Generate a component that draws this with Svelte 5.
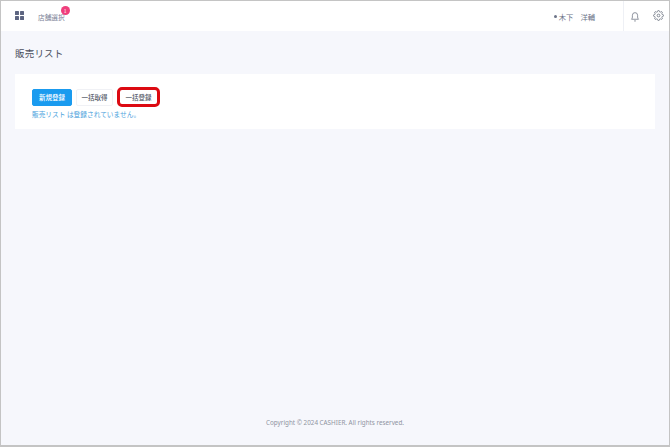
<script>
  const actions = [
    { label: '新規登録', kind: 'primary' },
    { label: '一括取得', kind: 'plain' },
    { label: '一括登録', kind: 'marked' }
  ];
</script>

<div class="frame">
  <header class="topbar">
    <div class="left">
      <svg class="grid" width="9" height="9" viewBox="0 0 10 10" fill="#5c6480">
        <rect x="0" y="0" width="4.4" height="4.4" rx="0.6" />
        <rect x="5.6" y="0" width="4.4" height="4.4" rx="0.6" />
        <rect x="0" y="5.6" width="4.4" height="4.4" rx="0.6" />
        <rect x="5.6" y="5.6" width="4.4" height="4.4" rx="0.6" />
      </svg>
      <div class="store">
        店舗選択
        <span class="badge">1</span>
      </div>
    </div>
    <div class="right">
      <div class="user"><span class="dot"></span>木下<span class="given">洋輔</span></div>
      <div class="icon-cell bell">
        <svg width="10" height="11" viewBox="0 0 20 22" fill="none" stroke="#6b7280" stroke-width="1.5" stroke-linejoin="round">
          <path d="M3 16.5c1.2-1.4 1.8-2.6 1.8-4.5V8.5a5.2 5.2 0 0 1 10.4 0V12c0 1.900.6 3.100 1.800 4.500z" />
          <path d="M8 19c.5 1.300 3.500 1.300 4 0" />
        </svg>
      </div>
      <div class="icon-cell gear">
        <svg width="11" height="11" viewBox="0 0 24 24" fill="none" stroke="#6b7280" stroke-width="1.800">
          <circle cx="12" cy="12" r="3" />
          <path d="M19.4 15a1.65 1.65 0 0 0 .33 1.82l.06.06a2 2 0 0 1 0 2.83 2 2 0 0 1-2.83 0l-.06-.06a1.65 1.65 0 0 0-1.82-.33 1.65 1.65 0 0 0-1 1.51V21a2 2 0 0 1-2 2 2 2 0 0 1-2-2v-.09A1.65 1.65 0 0 0 9 19.4a1.65 1.65 0 0 0-1.82.33l-.06.06a2 2 0 0 1-2.83 0 2 2 0 0 1 0-2.83l.06-.06a1.65 1.65 0 0 0 .33-1.82 1.65 1.65 0 0 0-1.51-1H3a2 2 0 0 1-2-2 2 2 0 0 1 2-2h.09A1.65 1.65 0 0 0 4.6 9a1.65 1.65 0 0 0-.33-1.82l-.06-.06a2 2 0 0 1 0-2.83 2 2 0 0 1 2.83 0l.06.06a1.65 1.65 0 0 0 1.82.33H9a1.65 1.65 0 0 0 1-1.51V3a2 2 0 0 1 2-2 2 2 0 0 1 2 2v.09a1.65 1.65 0 0 0 1 1.51 1.65 1.65 0 0 0 1.82-.33l.06-.06a2 2 0 0 1 2.83 0 2 2 0 0 1 0 2.83l-.06.06a1.65 1.65 0 0 0-.33 1.82V9a1.65 1.65 0 0 0 1.51 1H21a2 2 0 0 1 2 2 2 2 0 0 1-2 2h-.09a1.65 1.65 0 0 0-1.51 1z" />
        </svg>
      </div>
    </div>
  </header>

  <main class="content">
    <h1>販売リスト</h1>
    <section class="card">
      <div class="actions">
        {#each actions as action}
          <button class={action.kind}>{action.label}</button>
        {/each}
      </div>
      <p class="empty">販売リスト は登録されていません。</p>
    </section>
  </main>

  <footer>Copyright © 2024 CASHIER. All rights reserved.</footer>
</div>

<style>
  :global(body) {
    margin: 0;
  }

  .frame {
    box-sizing: border-box;
    width: 670px;
    height: 447px;
    border: 1px solid #c4c4c4;
    border-bottom-width: 2px;
    background: #f6f7fc;
    display: flex;
    flex-direction: column;
    font-family: "Noto Sans CJK JP", "Noto Sans", sans-serif;
  }

  .topbar {
    height: 30px;
    background: #fff;
    display: flex;
    justify-content: space-between;
    flex-shrink: 0;
  }

  .left {
    display: flex;
    align-items: center;
    padding-left: 14px;
    gap: 14px;
  }

  .grid {
    margin-top: -1px;
  }

  .store {
    position: relative;
    font-size: 6.700px;
    color: #7c8398;
    margin-top: 1px;
  }

  .badge {
    position: absolute;
    top: -6px;
    right: -5px;
    width: 9px;
    height: 9px;
    border-radius: 50%;
    background: #ef3f7c;
    color: #fff;
    font-size: 5px;
    line-height: 9px;
    text-align: center;
  }

  .right {
    display: flex;
    align-items: stretch;
  }

  .user {
    display: flex;
    align-items: center;
    font-size: 7.300px;
    color: #6c7488;
    padding-right: 28px;
    margin-top: 1px;
  }

  .dot {
    width: 3px;
    height: 3px;
    border-radius: 50%;
    background: #6c7488;
    margin-right: 2px;
  }

  .given {
    margin-left: 7px;
  }

  .icon-cell {
    display: flex;
    align-items: center;
    justify-content: center;
  }

  .bell {
    width: 22px;
    border-left: 1px solid #eef0f5;
    margin-right: 2px;
  }

  .gear {
    width: 21px;
    margin-top: -1px;
  }

  .content {
    flex: 1;
    padding: 0 14px;
  }

  h1 {
    margin: 14px 0 13px;
    font-size: 9.500px;
    line-height: 16px;
    font-weight: 400;
    color: #4a4f5c;
    letter-spacing: 0.2px;
  }

  .card {
    background: #fff;
    height: 55px;
    box-sizing: border-box;
    padding: 13px 17px 0;
  }

  .actions {
    display: flex;
    align-items: center;
    gap: 4px;
  }

  button {
    height: 17px;
    padding: 0;
    width: 37px;
    border: 1px solid #f0f1f5;
    border-radius: 2px;
    background: #fff;
    color: #555b68;
    font-family: inherit;
    font-size: 6.500px;
    font-weight: 500;
    line-height: 1;
  }

  .primary {
    width: 40px;
    background: #1a9bef;
    border-color: #1a9bef;
    color: #fff;
  }

  .marked {
    width: 43px;
    height: 20px;
    border: 3px solid #dc0a12;
    border-radius: 5px;
  }

  .empty {
    margin: 2px 0 0;
    font-size: 6.700px;
    line-height: 11px;
    color: #4a9fdc;
  }

  footer {
    height: 28px;
    flex-shrink: 0;
    font-family: "Noto Sans", sans-serif;
    font-size: 6.300px;
    color: #8f94a1;
    text-align: center;
    line-height: 12px;
  }
</style>
